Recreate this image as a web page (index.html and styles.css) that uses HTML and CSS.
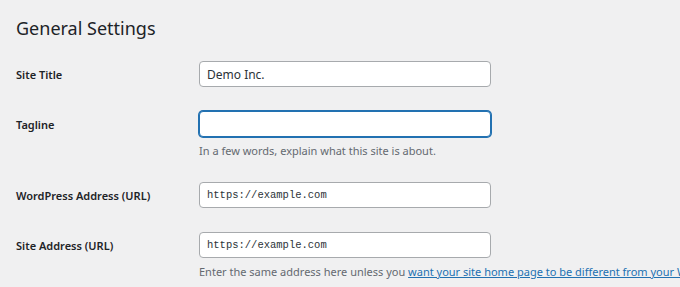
FILE: index.html
```html
<!DOCTYPE html>
<html>
<head>
<meta charset="utf-8">
<link rel="stylesheet" href="styles.css">
</head>
<body>
<div class="wrap">
  <h1 class="title">General Settings</h1>
  <div class="form">
    <div class="row">
      <label class="label">Site Title</label>
      <div class="field"><input class="input" type="text" value="Demo Inc."></div>
    </div>
    <div class="row">
      <label class="label">Tagline</label>
      <div class="field">
        <input class="input focused" type="text" value="">
        <p class="desc">In a few words, explain what this site is about.</p>
      </div>
    </div>
    <div class="row">
      <label class="label">WordPress Address (URL)</label>
      <div class="field"><input class="input mono" type="text" value="https://example.com"></div>
    </div>
    <div class="row">
      <label class="label">Site Address (URL)</label>
      <div class="field">
        <input class="input mono" type="text" value="https://example.com">
        <p class="desc nowrap">Enter the same address here unless you <a class="link" href="#">want your site home page to be different from your WordPress installation directory</a>.</p>
      </div>
    </div>
  </div>
</div>
</body>
</html>
```
FILE: styles.css
```css
html, body {
  margin: 0;
  padding: 0;
  background: #f0f0f1;
  overflow: hidden;
}
body {
  font-family: "Noto Sans", "Open Sans", sans-serif;
  color: #1d2327;
  width: 680px;
  height: 287px;
}
.wrap {
  padding: 0 0 0 16px;
}
.title {
  margin: 0;
  padding-top: 14px;
  font-size: 18px;
  font-weight: 400;
  line-height: 28px;
  height: 28px;
}
.form {
  margin-top: 19px;
  display: flex;
  flex-direction: column;
  gap: 23px;
}
.row {
  display: flex;
  align-items: flex-start;
}
.label {
  width: 183px;
  flex: none;
  font-size: 11px;
  font-weight: 600;
  line-height: 26px;
  padding-top: 1px;
}
.field {
  display: flex;
  flex-direction: column;
}
.input {
  box-sizing: border-box;
  width: 292px;
  height: 26px;
  margin: 0;
  padding: 0 7px;
  border: 1px solid #a7aaad;
  border-radius: 4px;
  background: #fff;
  font-family: "Noto Sans", sans-serif;
  font-size: 12px;
  color: #2c3338;
  outline: none;
}
.focused {
  border: 1px solid #2271b1;
  box-shadow: 0 0 0 1px #2271b1;
}
.mono {
  font-family: "Liberation Mono", monospace;
  font-size: 10.5px;
}
.desc {
  margin: 5px 0 0;
  font-size: 11px;
  line-height: 17px;
  color: #646970;
}
.nowrap {
  white-space: nowrap;
}
.link {
  color: #2271b1;
  text-decoration: underline;
}
```
